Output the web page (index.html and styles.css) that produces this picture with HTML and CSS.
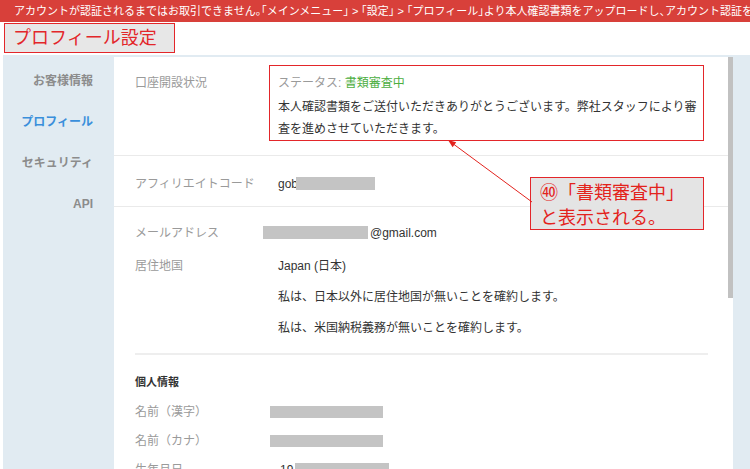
FILE: index.html
```html
<!DOCTYPE html>
<html lang="ja">
<head>
    <meta charset="UTF-8">
    <meta name="viewport" content="width=device-width, initial-scale=1.0">
    <title>プロフィール設定</title>
    <link rel="stylesheet" href="styles.css">
</head>
<body>
    <div class="alert">アカウントが認証されるまではお取引できません。「メインメニュー」 &gt; 「設定」 &gt; 「プロフィール」より本人確認書類をアップロードし、アカウント認証を完了してください。</div>

    <header class="page-head">
        <h1 class="page-title">プロフィール設定</h1>
    </header>

    <div class="layout">
        <nav class="sidebar">
            <a class="nav-item">お客様情報</a>
            <a class="nav-item active">プロフィール</a>
            <a class="nav-item">セキュリティ</a>
            <a class="nav-item">API</a>
        </nav>

        <main class="panel">
            <!-- account status -->
            <section class="row row-status">
                <div class="label label-status">口座開設状況</div>
                <div class="status-box">
                    <div class="status-line">ステータス: <span class="status-value">書類審査中</span></div>
                    <p class="status-text">本人確認書類をご送付いただきありがとうございます。弊社スタッフにより審査を進めさせていただきます。</p>
                </div>
            </section>

            <section class="row row-affiliate">
                <div class="label">アフィリエイトコード</div>
                <div class="value">gob<span class="redact redact-code"></span></div>
            </section>

            <section class="details">
                <div class="field field-mail">
                    <div class="label">メールアドレス</div>
                    <div class="value"><span class="redact redact-mail"></span>@gmail.com</div>
                </div>
                <div class="field">
                    <div class="label">居住地国</div>
                    <div class="value">Japan (日本)</div>
                </div>
                <div class="field">
                    <div class="label"></div>
                    <div class="value">私は、日本以外に居住地国が無いことを確約します。</div>
                </div>
                <div class="field">
                    <div class="label"></div>
                    <div class="value">私は、米国納税義務が無いことを確約します。</div>
                </div>

                <hr class="divider">

                <h2 class="section-title">個人情報</h2>
                <div class="field field-personal">
                    <div class="label">名前（漢字）</div>
                    <div class="value"><span class="redact redact-name"></span></div>
                </div>
                <div class="field field-personal">
                    <div class="label">名前（カナ）</div>
                    <div class="value"><span class="redact redact-name"></span></div>
                </div>
                <div class="field field-personal">
                    <div class="label">生年月日</div>
                    <div class="value value-birth">19<span class="redact redact-birth"></span></div>
                </div>
            </section>
        </main>

        <div class="scrollbar"><div class="scroll-thumb"></div></div>
    </div>

    <!-- annotation overlay -->
    <div class="callout">㊵「書類審査中」<br>と表示される。</div>
    <svg class="callout-arrow" width="750" height="469" viewBox="0 0 750 469">
        <line x1="532" y1="202" x2="452" y2="143" stroke="#e2231e" stroke-width="1"/>
        <polygon points="448,140 456.2,142.3 452.6,147.2" fill="#e2231e"/>
    </svg>
</body>
</html>
```

FILE: styles.css
```css
body {
    margin: 0;
    width: 750px;
    height: 469px;
    overflow: hidden;
    position: relative;
    background: #fff;
    font-family: 'Liberation Sans', 'Noto Sans CJK JP', sans-serif;
    font-size: 12px;
    color: #333;
}

.alert {
    height: 22px;
    line-height: 22px;
    padding-left: 14px;
    background: #d8403a;
    color: #fff;
    font-size: 11px;
    font-feature-settings: "halt";
    white-space: nowrap;
    overflow: hidden;
}

.page-head {
    height: 32px;
    padding-top: 1px;
}

.page-title {
    box-sizing: border-box;
    margin: 0 0 0 4px;
    width: 171px;
    height: 30px;
    line-height: 28px;
    padding-left: 8px;
    background: #e7e7e7;
    border: 1px solid #e3262a;
    color: #e3262a;
    font-size: 18px;
    font-weight: normal;
}

.layout {
    display: flex;
    margin-left: 3px;
    height: 415px;
    background: #e1ebf2;
}

/* Sidebar */
.sidebar {
    width: 111px;
    padding-top: 6px;
    display: flex;
    flex-direction: column;
}

.nav-item {
    display: block;
    line-height: 41px;
    padding-right: 21px;
    text-align: right;
    color: #8c8c8c;
    font-weight: bold;
    font-size: 12px;
}

.nav-item.active {
    color: #3a8fdb;
}

/* Panel */
.panel {
    width: 614px;
    margin-top: 2px;
    background: #fff;
}

.row {
    display: flex;
    padding-left: 21px;
    border-bottom: 1px solid #eaeaea;
}

.label {
    flex: none;
    width: 143px;
    line-height: 18px;
    color: #9a9a9a;
}

.value {
    line-height: 18px;
    color: #333;
}

.row-status {
    padding-top: 8px;
    padding-bottom: 14px;
}

.label-status {
    width: 134px;
    padding-top: 9px;
}

.status-box {
    box-sizing: border-box;
    width: 435px;
    height: 76px;
    padding: 7px 4px 0 8px;
    border: 1px solid #e3262a;
}

.status-line {
    line-height: 20px;
    color: #9a9a9a;
}

.status-value {
    color: #4cae3f;
}

.status-text {
    margin: 3px 0 0;
    line-height: 22px;
    color: #333;
}

.row-affiliate {
    padding-top: 19px;
    padding-bottom: 13px;
}

.redact {
    display: inline-block;
    height: 13px;
    background: #c4c4c4;
    vertical-align: -2px;
}

.redact-code {
    width: 79px;
    margin-left: -2px;
}

.redact-mail {
    width: 105px;
    margin-left: -15px;
    margin-right: 2px;
}

.redact-name {
    width: 113px;
    height: 12px;
}

.redact-birth {
    width: 94px;
    margin-left: 2px;
}

/* Details */
.details {
    padding: 17px 20px 0 21px;
}

.field {
    display: flex;
    margin-bottom: 13px;
}

.field-mail {
    margin-bottom: 15px;
}

.divider {
    margin: 16px 0 0;
    border: none;
    height: 2px;
    background: #eeeeee;
}

.section-title {
    margin: 18px 0 12px;
    line-height: 18px;
    font-size: 11px;
    font-weight: bold;
    color: #333;
}

.field-personal {
    margin-bottom: 11px;
}

.field-personal .label {
    width: 135px;
}

.value-birth {
    padding-left: 10px;
}

/* Scrollbar */
.scrollbar {
    width: 5px;
    margin-top: 2px;
    background: #fff;
}

.scroll-thumb {
    height: 241px;
    background: #c1c1c1;
}

/* Annotation */
.callout {
    position: absolute;
    left: 530px;
    top: 177px;
    box-sizing: border-box;
    width: 174px;
    height: 53px;
    padding: 1px 0 0 9px;
    background: #e4e4e4;
    border: 1px solid #e3262a;
    color: #e3231c;
    font-family: 'Noto Sans CJK JP', sans-serif;
    font-size: 18px;
    line-height: 25px;
    white-space: nowrap;
}

.callout-arrow {
    position: absolute;
    left: 0;
    top: 0;
    pointer-events: none;
}
```
